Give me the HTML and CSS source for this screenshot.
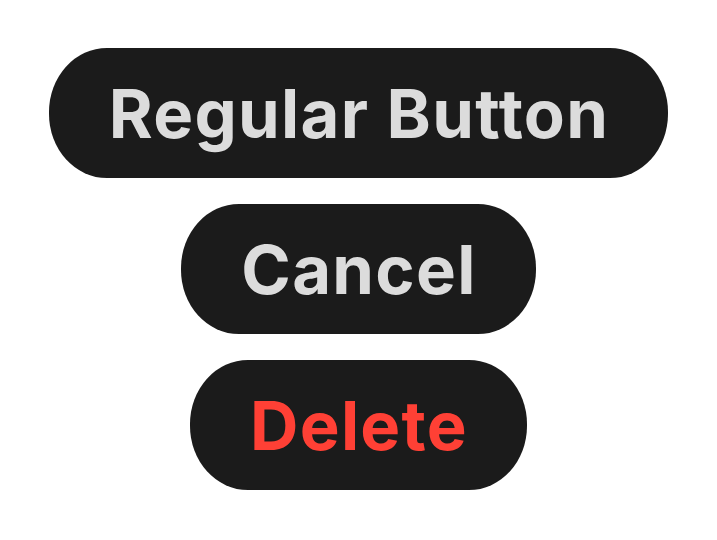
FILE: index.html
```html
<!DOCTYPE html>
<html>
<head>
<meta charset="utf-8">
<link rel="stylesheet" href="styles.css">
</head>
<body>
<div class="stack">
  <button class="btn">Regular Button</button>
  <button class="btn">Cancel</button>
  <button class="btn btn-danger">Delete</button>
</div>
</body>
</html>
```

FILE: styles.css
```css
html, body {
  margin: 0;
  padding: 0;
  background: #ffffff;
}
.stack {
  display: flex;
  flex-direction: column;
  align-items: center;
  gap: 26px;
  padding-top: 48px;
}
.btn {
  height: 130px;
  padding: 0 59px 0 60px;
  border: none;
  border-radius: 58px / 64px;
  background: #1b1b1b;
  color: #dcdcdc;
  font-family: Inter, "Noto Sans", sans-serif;
  font-weight: 700;
  font-size: 67px;
  letter-spacing: 1.3px;
  line-height: 1;
  cursor: pointer;
}
.btn-danger {
  color: #ff4035;
}
```
